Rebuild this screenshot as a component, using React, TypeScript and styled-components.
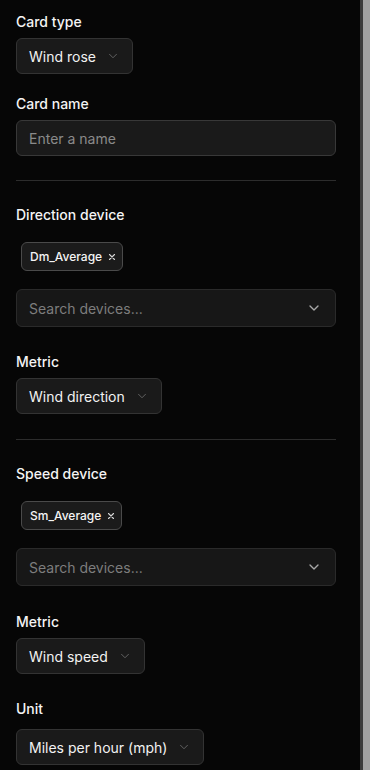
import React from "react";
import styled, { createGlobalStyle } from "styled-components";

const Global = createGlobalStyle`
  html, body { margin: 0; padding: 0; background: #060606; }
  body { font-family: Inter, "Noto Sans", sans-serif; color: #f2f2f2; }
  * { box-sizing: border-box; }
`;

const Page = styled.div`
  display: flex;
  width: 370px;
  height: 770px;
  overflow: hidden;
  background: #060606;
`;

const Panel = styled.div`
  flex: 1;
  display: flex;
  flex-direction: column;
  padding: 12px 24px 0 16px;
`;

const Rail = styled.div`
  width: 10px;
  flex: none;
  background: #a0a0a0;
  border-left: 3px solid #3a3a3a;
`;

const Field = styled.div<{ $mt?: number }>`
  display: flex;
  flex-direction: column;
  align-items: flex-start;
  margin-top: ${(p) => p.$mt ?? 0}px;
`;

const Label = styled.div<{ $mb?: number }>`
  font-size: 14px;
  line-height: 20px;
  font-weight: 500;
  color: #f4f4f4;
  margin-bottom: ${(p) => p.$mb ?? 6}px;
`;

const SelectBtn = styled.button`
  display: flex;
  align-items: center;
  gap: 10px;
  height: 36px;
  padding: 0 12px 0 12px;
  background: #1a1a1a;
  border: 1px solid #333333;
  border-radius: 6px;
  color: #f2f2f2;
  font-family: inherit;
  font-size: 14px;
  font-weight: 400;
`;

const TextInput = styled.input`
  width: 100%;
  height: 36px;
  padding: 0 12px;
  background: #1a1a1a;
  border: 1px solid #383838;
  border-radius: 6px;
  color: #f2f2f2;
  font-family: inherit;
  font-size: 14px;
  outline: none;
  &::placeholder { color: #8a8a8a; }
`;

const Divider = styled.hr<{ $mt?: number }>`
  width: 100%;
  border: none;
  height: 1px;
  background: #2c2c2c;
  margin: ${(p) => p.$mt ?? 24}px 0 24px;
`;

const ChipRow = styled.div`
  display: flex;
  gap: 6px;
  padding: 17px 5px 0;
`;

const Chip = styled.div`
  display: flex;
  align-items: center;
  gap: 5px;
  height: 29px;
  padding: 0 5px 0 8px;
  background: #1b1b1b;
  border: 1px solid #4a4a4a;
  border-radius: 6px;
  font-size: 12px;
  font-weight: 500;
  color: #f4f4f4;
`;

const Search = styled.div`
  display: flex;
  align-items: center;
  justify-content: space-between;
  width: 100%;
  height: 38px;
  margin-top: 18px;
  padding: 0 13px 0 12px;
  background: #171717;
  border: 1px solid #2a2a2a;
  border-radius: 6px;
  font-size: 14px;
  color: #7d7d7d;
`;

const Chevron = ({ size = 12, color = "#6a6a6a", sw = 1.5 }: { size?: number; color?: string; sw?: number }) => (
  <svg width={size} height={size} viewBox="0 0 24 24" fill="none" stroke={color} strokeWidth={sw} strokeLinecap="round" strokeLinejoin="round">
    <path d="m6 9 6 6 6-6" />
  </svg>
);

const XIcon = () => (
  <svg width="10" height="10" viewBox="0 0 24 24" fill="none" stroke="#d8d8d8" strokeWidth="2.6" strokeLinecap="round">
    <path d="M18 6 6 18M6 6l12 12" />
  </svg>
);

const Select = ({ value }: { value: string }) => (
  <SelectBtn>
    {value}
    <Chevron size={14} />
  </SelectBtn>
);

const DeviceField = ({ label, chip }: { label: string; chip: string }) => (
  <Field>
    <Label $mb={0}>{label}</Label>
    <ChipRow>
      <Chip>
        {chip}
        <XIcon />
      </Chip>
    </ChipRow>
    <Search>
      Search devices...
      <Chevron size={16} color="#a8a8a8" sw={2} />
    </Search>
  </Field>
);

export default function App() {
  return (
    <>
      <Global />
      <Page>
        <Panel>
          <Field>
            <Label>Card type</Label>
            <Select value="Wind rose" />
          </Field>
          <Field $mt={20}>
            <Label>Card name</Label>
            <TextInput placeholder="Enter a name" />
          </Field>
          <Divider />
          <DeviceField label="Direction device" chip="Dm_Average" />
          <Field $mt={25}>
            <Label>Metric</Label>
            <Select value="Wind direction" />
          </Field>
          <Divider $mt={25} />
          <DeviceField label="Speed device" chip="Sm_Average" />
          <Field $mt={26}>
            <Label>Metric</Label>
            <Select value="Wind speed" />
          </Field>
          <Field $mt={25}>
            <Label $mb={10}>Unit</Label>
            <Select value="Miles per hour (mph)" />
          </Field>
        </Panel>
        <Rail />
      </Page>
    </>
  );
}
